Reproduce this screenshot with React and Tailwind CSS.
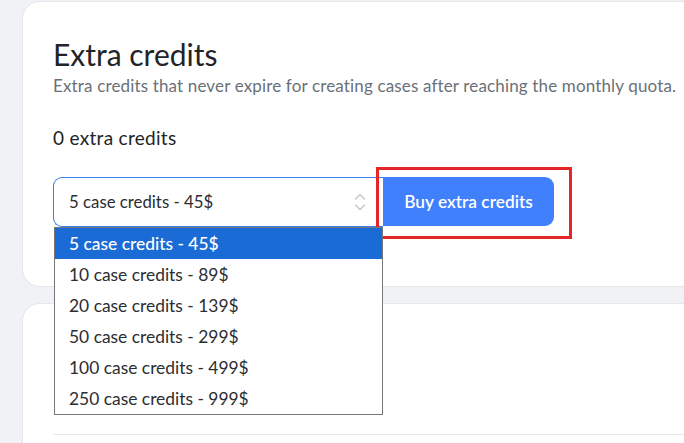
import React from "react";

const OPTIONS = [
  "5 case credits - 45$",
  "10 case credits - 89$",
  "20 case credits - 139$",
  "50 case credits - 299$",
  "100 case credits - 499$",
  "250 case credits - 999$",
];

function UpDown() {
  return (
    <svg width="12" height="20" viewBox="0 0 12 20" fill="none" stroke="#c4c7cc" strokeWidth="1.4" strokeLinecap="round" strokeLinejoin="round">
      <path d="M1.5 7 L6 2.5 L10.5 7" />
      <path d="M1.5 13 L6 17.5 L10.5 13" />
    </svg>
  );
}

export default function App() {
  return (
    <div className="h-[443px] w-[684px] overflow-hidden bg-[#f0f2f6] pl-[22px] pt-[1px] font-['Lato',sans-serif]">
      <div className="flex flex-col gap-[16px]">
        {/* Extra credits card */}
        <div className="h-[286px] rounded-l-[18px] border border-r-0 border-[#e4e7ec] bg-white pl-[30px] pt-[34px]">
          <h2 className="text-[30px] leading-[36px] text-[#222427]">Extra credits</h2>
          <p className="mt-[4px] whitespace-nowrap text-[17px] leading-[20px] tracking-[0.15px] text-[#6b7078]">
            Extra credits that never expire for creating cases after reaching the monthly quota.
          </p>
          <p className="mt-[30px] text-[19px] leading-[24px] tracking-[0.3px] text-[#222427]">0 extra credits</p>

          <div className="relative mt-[27px] flex">
            <div className="flex h-[50px] w-[330px] items-center justify-between rounded-l-[9px] border border-r-0 border-[#3b7bf6] bg-white pl-[15px] pr-[17px]">
              <span className="text-[16.8px] text-[#2b2d31]">{OPTIONS[0]}</span>
              <UpDown />
            </div>
            <div className="relative">
              <button className="flex h-[49px] w-[171px] items-center justify-center rounded-r-[9px] bg-[#4080fc] text-[17.3px] font-semibold text-white">
                Buy extra credits
              </button>
              <div className="pointer-events-none absolute left-[-7px] top-[-10px] h-[72px] w-[196px] border-[3px] border-[#e32626]" />
            </div>

            {/* open dropdown list */}
            <div className="absolute left-[1px] top-[50px] w-[329px] border border-[#777] bg-white">
              {OPTIONS.map((o, i) => (
                <div
                  key={o}
                  className={
                    "flex h-[31px] items-center pl-[14px] pt-[1px] text-[17.4px] " +
                    (i === 0 ? "bg-[#1b6bd6] font-medium text-white" : "text-[#2b2d31]")
                  }
                >
                  {o}
                </div>
              ))}
            </div>
          </div>
        </div>

        {/* Next card */}
        <div className="h-[200px] rounded-l-[18px] border border-r-0 border-[#e4e7ec] bg-white pl-[30px] pt-[130px]">
          <div className="h-px bg-[#e8e9ec]" />
        </div>
      </div>
    </div>
  );
}
